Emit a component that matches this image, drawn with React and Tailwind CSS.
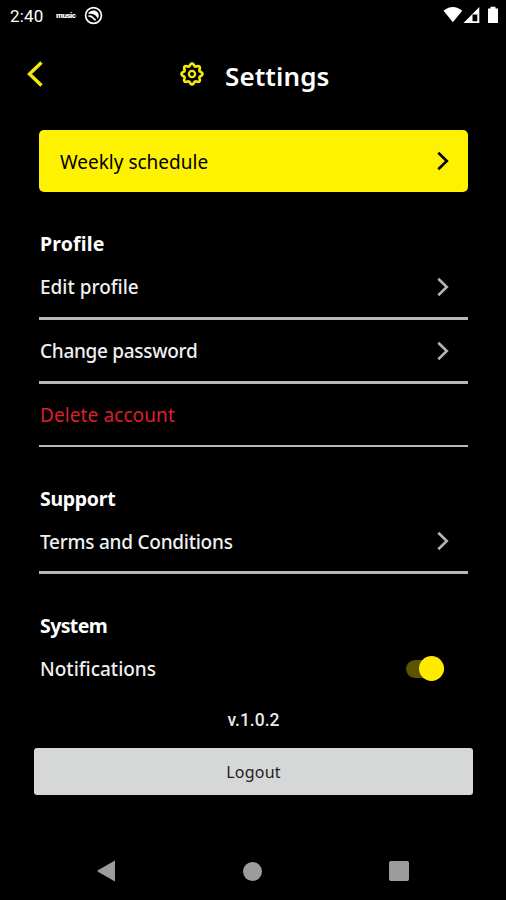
import { useState } from "react";

const Chevron = ({ className }) => (
  <svg
    className={className}
    width="12"
    height="20"
    viewBox="0 0 12 20"
    fill="none"
    stroke="currentColor"
    strokeWidth="2.6"
  >
    <path d="M1.3 1.8 9.8 10l-8.500 8.200" />
  </svg>
);

const GearIcon = () => {
  // eight rounded teeth around the hub
  const points = [];
  for (let i = 0; i < 96; i++) {
    const a = (i / 96) * Math.PI * 2;
    const r = 9.3 + 1.2 * Math.cos(a * 8);
    points.push(`${(12 + r * Math.cos(a)).toFixed(2)},${(12 + r * Math.sin(a)).toFixed(2)}`);
  }
  return (
    <svg width="24" height="24" viewBox="0 0 24 24" fill="none" stroke="#f3e712" strokeWidth="2.7">
      <polygon points={points.join(" ")} strokeLinejoin="round" />
      <circle cx="12" cy="12" r="3.1" strokeWidth="2.3" />
    </svg>
  );
};

const StatusBar = () => (
  <div className="flex h-8 items-center pl-[10px] pr-[7px] text-white">
    <span className="w-[36px] whitespace-nowrap font-['Roboto',sans-serif] text-[17px] leading-8 tracking-[0.2px]">
      2:40
    </span>
    <span className="ml-[10px] w-[20px] font-['Roboto',sans-serif] text-[8px] font-black leading-none tracking-[-0.500px]">
      music
    </span>
    <svg className="mb-[2px] ml-2" width="19" height="19" viewBox="0 0 19 19" fill="none" stroke="#fff">
      <circle cx="9.5" cy="9.5" r="7.9" strokeWidth="1.7" />
      <path d="M4 7.500C6 4.200 11 3.500 13.600 6.200c1.600 2 1.400 4.700.2 6.600-1-2.200-2.300-3.800-4.300-4.500-1.700-.6-3.500-.2-5.500-.8z" fill="#fff" stroke="none" />
      <path d="M4.500 10.200c2.200-.4 3.800.6 4.600 1.800.600 1 1.300 1.700 2.700 2" strokeWidth="1.700" />
    </svg>
    <svg className="mb-[2px] ml-auto" width="56" height="18" viewBox="0 0 56 18" fill="#fff">
      <path d="M.5 4.800C6-.3 13.700-.3 19.200 4.800L9.900 16.200z" />
      <path d="M20.500 17 36.300 1v16zM29.500 15.200h4.800V8.500h-4.800z" fillRule="evenodd" />
      <path d="M45 2.500h2.500V.700h5v1.800H55V17H45z" />
    </svg>
  </div>
);

const Section = ({ title, tracking, children }) => (
  <section className="flex flex-col pt-[38px]">
    <h2 className={`h-[26px] pl-px text-[19.500px] font-bold leading-[27px] text-white ${tracking}`}>
      {title}
    </h2>
    {children}
  </section>
);

const Row = ({ label, className, danger }) => (
  <div className={`flex items-center justify-between border-[#b9b7b8] pl-px pr-[19px] ${className}`}>
    <span className={`pt-[2px] ${danger ? "text-[#dc1f2b]" : "font-medium text-[#f0f0f0]"}`}>
      {label}
    </span>
    {!danger && <Chevron className="text-[#b5b5b5]" />}
  </div>
);

const App = () => {
  const [notifications, setNotifications] = useState(true);

  return (
    <div className="flex h-[900px] w-[506px] flex-col overflow-hidden bg-black font-['Noto_Sans',sans-serif] text-[19px]">
      <StatusBar />

      <header className="grid h-[98px] grid-cols-[180px_1fr] items-start pt-[28px]">
        <button className="ml-[26px] mt-px w-5">
          <svg width="18" height="26" viewBox="0 0 18 26" fill="none" stroke="#f3e712" strokeWidth="3.400">
            <path d="M15.500 1.500 3.500 13l12 11.500" />
          </svg>
        </button>
        <div className="flex">
          <div className="mt-[2px]">
            <GearIcon />
          </div>
          <h1 className="ml-[21px] text-[26px] font-semibold leading-8 tracking-[0.1px] text-white">
            Settings
          </h1>
        </div>
      </header>

      <main className="flex flex-col pl-[39px] pr-[38px]">
        <button className="flex h-[62px] items-center justify-between rounded-[5px] bg-[#fff200] pl-[21px] pr-[19px] text-black">
          <span className="pt-[2px]">Weekly schedule</span>
          <Chevron />
        </button>
        <Section title="Profile" tracking="tracking-[0.150px]">
          <Row label="Edit profile" className="h-16 border-b-[3px]" />
          <Row label="Change password" className="h-16 border-b-[3px] tracking-[-0.300px]" />
          <Row label="Delete account" className="h-[63px] border-b-2 tracking-[0.1px]" danger />
        </Section>
        <Section title="Support" tracking="tracking-[-0.3px]">
          <Row label="Terms and Conditions" className="h-[63px] border-b-[3px] tracking-[-0.250px]" />
        </Section>
        <Section title="System" tracking="tracking-[-0.6px]">
          <div className="flex h-[61px] items-center justify-between pl-px pr-6">
            <span className="pt-[2px] font-medium text-[#f0f0f0]">Notifications</span>
            <button
              className={`flex h-[18px] w-[38px] items-center rounded-full bg-[#5b5400] ${notifications ? "justify-end" : "justify-start"}`}
              onClick={() => setNotifications(!notifications)}
            >
              <span className="h-[25px] w-[25px] rounded-full bg-[#ffea00]" />
            </button>
          </div>
        </Section>
      </main>

      <footer className="flex flex-col items-center pt-[9px]">
        <span className="h-10 pl-px font-['Roboto',sans-serif] text-[17.500px] font-medium leading-6 text-[#e8e8e8]">
          v.1.0.2
        </span>
        <button className="h-[47px] w-[439px] rounded-[3px] bg-[#d6d8d7] pl-px text-[16px] tracking-[0.2px] text-[#222]">
          Logout
        </button>
        <nav className="mt-[65px] flex w-full items-center justify-between pl-[97px] pr-[97px]">
          <svg width="18" height="22" viewBox="0 0 19 22" fill="#9c9c9c">
            <path d="M19 0v22L1 11.800q-1-.8 0-1.600z" />
          </svg>
          <span className="h-[19px] w-[19px] rounded-full bg-[#9c9c9c]" />
          <span className="h-[20px] w-[20px] rounded-[2px] bg-[#9c9c9c]" />
        </nav>
      </footer>
    </div>
  );
};

export default App;
